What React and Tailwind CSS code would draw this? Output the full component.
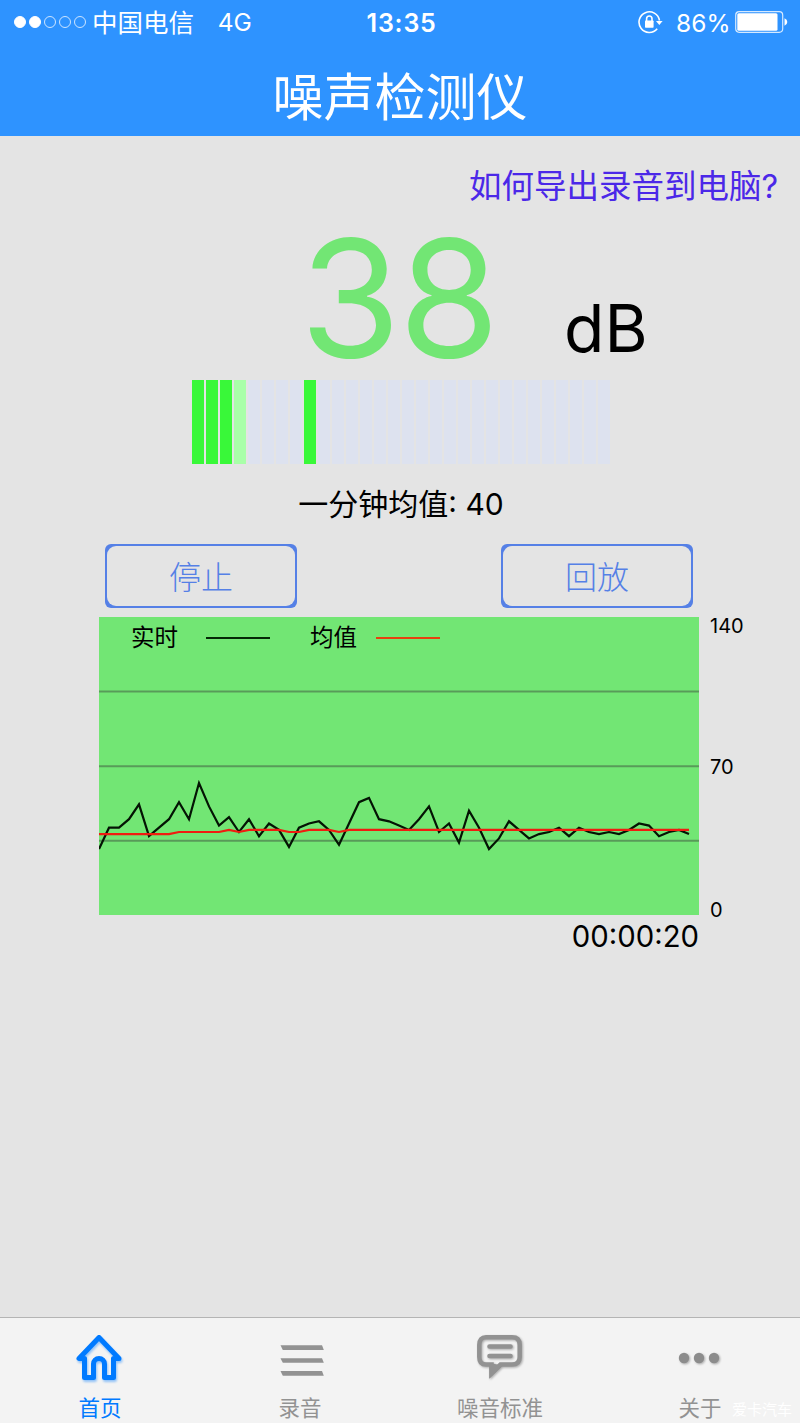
const REALTIME = [
  31, 41, 41, 45, 52, 37, 41, 45, 53, 45, 62, 51, 42, 46, 39, 45, 37, 43, 40, 32,
  41, 43, 44, 40, 33, 43, 53, 55, 45, 44, 42, 40, 45, 51, 39, 43, 34, 49, 41, 31,
  36, 44, 40, 36, 38, 39, 41, 37, 41, 39, 38, 39, 38, 40, 43, 42, 37, 39, 40, 38,
]

const AVERAGE = REALTIME.map((_, i) => {
  if (i < 8) return 38
  if (i < 13 || i === 14 || i === 19 || i === 20 || i === 24) return 39
  return 40
})

const CHART_W = 600
const CHART_H = 298
const MAX_DB = 140

const METER_BARS = 30
const PEAK_BAR = 8

function toPoints(values) {
  return values.map((v, i) => `${i * 10},${(CHART_H - (v / MAX_DB) * CHART_H).toFixed(1)}`).join(' ')
}

function meterColor(i) {
  if (i < 3 || i === PEAK_BAR) return 'bg-[#39f839]'
  if (i === 3) return 'bg-[#a9ffa9]'
  return 'bg-[#dde2ef]'
}

function StatusBar() {
  return (
    <div className="flex h-[45px] items-center pl-[14px] pr-[12px] text-[25px] leading-none">
      <div className="flex gap-[3px] pb-[2px]">
        {[1, 1, 0, 0, 0].map((on, i) => (
          <span key={i} className={`size-3 rounded-full border ${on ? 'border-white bg-white' : 'border-white/75'}`} />
        ))}
      </div>
      <span className="ml-[6px] w-[126px] whitespace-nowrap text-[25.5px]">中国电信</span>
      <span className="w-[149px] text-[24.5px]">4G</span>
      <span className="w-[272px] pt-px text-[25px] font-semibold tracking-[0.8px]">13:35</span>
      <svg className="mb-[2px] mr-[13px] shrink-0" width="25" height="24" viewBox="0 0 25 24" fill="none" stroke="white">
        <path d="M19.2 18.8A10.3 10.3 0 1 1 21.5 10.5" strokeWidth="1.6" />
        <path d="M18 11h6.6l-3.3 4z" fill="white" stroke="none" />
        <rect x="7" y="10.5" width="8.6" height="7.3" rx="0.7" fill="white" stroke="none" />
        <path d="M8.6 11V8.7a2.7 2.7 0 0 1 5.4 0V11" strokeWidth="1.6" />
      </svg>
      <span className="w-[59px] whitespace-nowrap pt-px text-[24.5px]">86%</span>
      <svg className="mb-px shrink-0" width="53" height="22" viewBox="0 0 53 22">
        <rect x="0.7" y="0.7" width="47" height="20.6" rx="3.5" fill="none" stroke="white" strokeOpacity="0.8" strokeWidth="1.2" />
        <rect x="2.3" y="2.3" width="40.2" height="17.4" rx="1.5" fill="white" />
        <path d="M49.5 7.3q2.8 1 2.8 3.7t-2.8 3.7z" fill="white" />
      </svg>
    </div>
  )
}

function Meter() {
  return (
    <div className="ml-[192px] mt-[10px] flex h-[84px] gap-[2px]">
      {Array.from({ length: METER_BARS }, (_, i) => (
        <div key={i} className={`w-3 ${meterColor(i)}`} />
      ))}
    </div>
  )
}

function OutlineButton({ children }) {
  return (
    <button
      type="button"
      className="h-16 w-48 rounded-md bg-[#5580e6] p-[2px] text-[32px] font-light leading-none text-[#5580e6]"
    >
      <span className="flex h-full items-center justify-center rounded-[9px] bg-[#e4e4e4] pt-[4px]">{children}</span>
    </button>
  )
}

function NoiseChart() {
  return (
    <div className="ml-[99px] mt-[9px] flex">
      <div className="h-[298px] w-[600px] bg-[#72e674]">
        {/* Legend sits on the same grid as the plot */}
        <div className="grid">
          <svg className="col-start-1 row-start-1" width={CHART_W} height={CHART_H} fill="none">
            {[1, 2, 3].map((n) => (
              <line key={n} x1="0" x2={CHART_W} y1={n * 74.6} y2={n * 74.6} stroke="#589b59" strokeWidth="2" />
            ))}
            <polyline points={toPoints(REALTIME)} stroke="#041404" strokeWidth="2.2" />
            <polyline points={toPoints(AVERAGE)} stroke="#f01c10" strokeWidth="2.2" />
          </svg>
          <div className="col-start-1 row-start-1 flex h-[42px] items-center pl-[32px] text-[23.5px] leading-none">
            <span className="w-[75px]">实时</span>
            <span className="h-[2px] w-16 bg-[#062806]" />
            <span className="ml-[40px] w-[66px]">均值</span>
            <span className="h-[2px] w-16 bg-[#e8400f]" />
          </div>
        </div>
      </div>
      <div className="-mt-px flex h-[304px] flex-col pl-[11px] text-[20px] leading-none">
        <span className="h-[141px]">140</span>
        <span className="h-[143px]">70</span>
        <span>0</span>
      </div>
    </div>
  )
}

function HomeIcon() {
  return (
    <svg
      className="mr-[2px] drop-shadow-[1px_2px_1px_rgba(0,122,255,0.4)]"
      width="48"
      height="48"
      viewBox="0 0 48 48"
      fill="none"
      stroke="#007aff"
      strokeWidth="5"
      strokeLinejoin="round"
    >
      <path d="M24 3.5 4 24.5h5.5v19h9V30a5.5 5.5 0 0 1 11 0v13.5h9v-19H44Z" />
    </svg>
  )
}

function ListIcon() {
  return (
    <svg className="ml-[3px]" width="48" height="48" viewBox="0 0 48 48" fill="#929292">
      {[11.3, 24.2, 37.1].map((y) => (
        <path key={y} d={`M2.5 ${y}H44l1.8 4.6H4.8Z`} />
      ))}
    </svg>
  )
}

function CommentIcon() {
  return (
    <svg
      className="drop-shadow-[1px_1px_1px_rgba(0,0,0,0.3)]"
      width="48"
      height="48"
      viewBox="0 0 48 48"
      fill="none"
      stroke="#929292"
      strokeWidth="4.5"
      strokeLinecap="round"
    >
      <path d="M10 3.2h26q7.7 0 7.7 7.7v12q0 7.7-7.7 7.7H24.5l-9 8.8v-8.8H10q-6.7 0-6.7-7.7v-12Q3.3 3.2 10 3.2Z" />
      <path d="M13.3 29v15.5L27 31.5Z" fill="#929292" stroke="none" />
      <path d="M13.5 12.5h21M13.5 22h21" strokeWidth="4.6" />
    </svg>
  )
}

function DotsIcon() {
  return (
    <svg
      className="mr-[2px] drop-shadow-[1px_1px_1px_rgba(0,0,0,0.3)]"
      width="48"
      height="48"
      viewBox="0 0 48 48"
      fill="#8c8c8c"
    >
      <circle cx="9" cy="24" r="5.2" />
      <circle cx="24" cy="24" r="5.2" />
      <circle cx="39" cy="24" r="5.2" />
    </svg>
  )
}

const TABS = [
  { label: '首页', Icon: HomeIcon, active: true },
  { label: '录音', Icon: ListIcon },
  { label: '噪音标准', Icon: CommentIcon },
  { label: '关于', Icon: DotsIcon },
]

function TabBar() {
  return (
    <nav className="relative mt-auto grid h-[106px] grid-cols-4 border-t border-[#b4b4b4] bg-[#f3f3f3]">
      {TABS.map(({ label, Icon, active }) => (
        <div
          key={label}
          className={`flex flex-col items-center pt-[16px] text-[21.5px] leading-none ${
            active ? 'text-[#007aff]' : 'text-[#929292]'
          }`}
        >
          <Icon />
          <span className="mt-[16px]">{label}</span>
        </div>
      ))}
      <span className="absolute bottom-[6px] right-[8px] text-[15px] leading-none text-white">爱卡汽车</span>
    </nav>
  )
}

export default function App() {
  return (
    <div className="flex h-[1423px] w-[800px] flex-col overflow-hidden bg-[#e4e4e4] font-[Inter,'Noto_Sans_CJK_SC',sans-serif] text-black">
      <header className="h-[136px] bg-[#2e93ff] text-white">
        <StatusBar />
        <h1 className="mt-[27px] text-center text-[51px] leading-none">噪声检测仪</h1>
      </header>

      <a className="mt-[35px] pr-[22px] text-right text-[32.5px] leading-none text-[#4b28e8]">如何导出录音到电脑?</a>

      <div className="mt-[14px] flex h-[152px] items-baseline pl-[300px] leading-none">
        <span className="w-[264px] text-[163px] leading-[160px] tracking-[-2px] text-[#72e674]">38</span>
        <span className="-translate-y-[5px] text-[66px]">dB</span>
      </div>

      <Meter />

      <p className="mt-[25px] pl-[2px] text-center text-[30px] leading-none">一分钟均值: 40</p>

      <div className="mt-[25px] flex justify-between pl-[105px] pr-[107px]">
        <OutlineButton>停止</OutlineButton>
        <OutlineButton>回放</OutlineButton>
      </div>

      <NoiseChart />

      <p className="mt-[2px] pr-[101px] text-right text-[29.3px] leading-none">00:00:20</p>

      <TabBar />
    </div>
  )
}
